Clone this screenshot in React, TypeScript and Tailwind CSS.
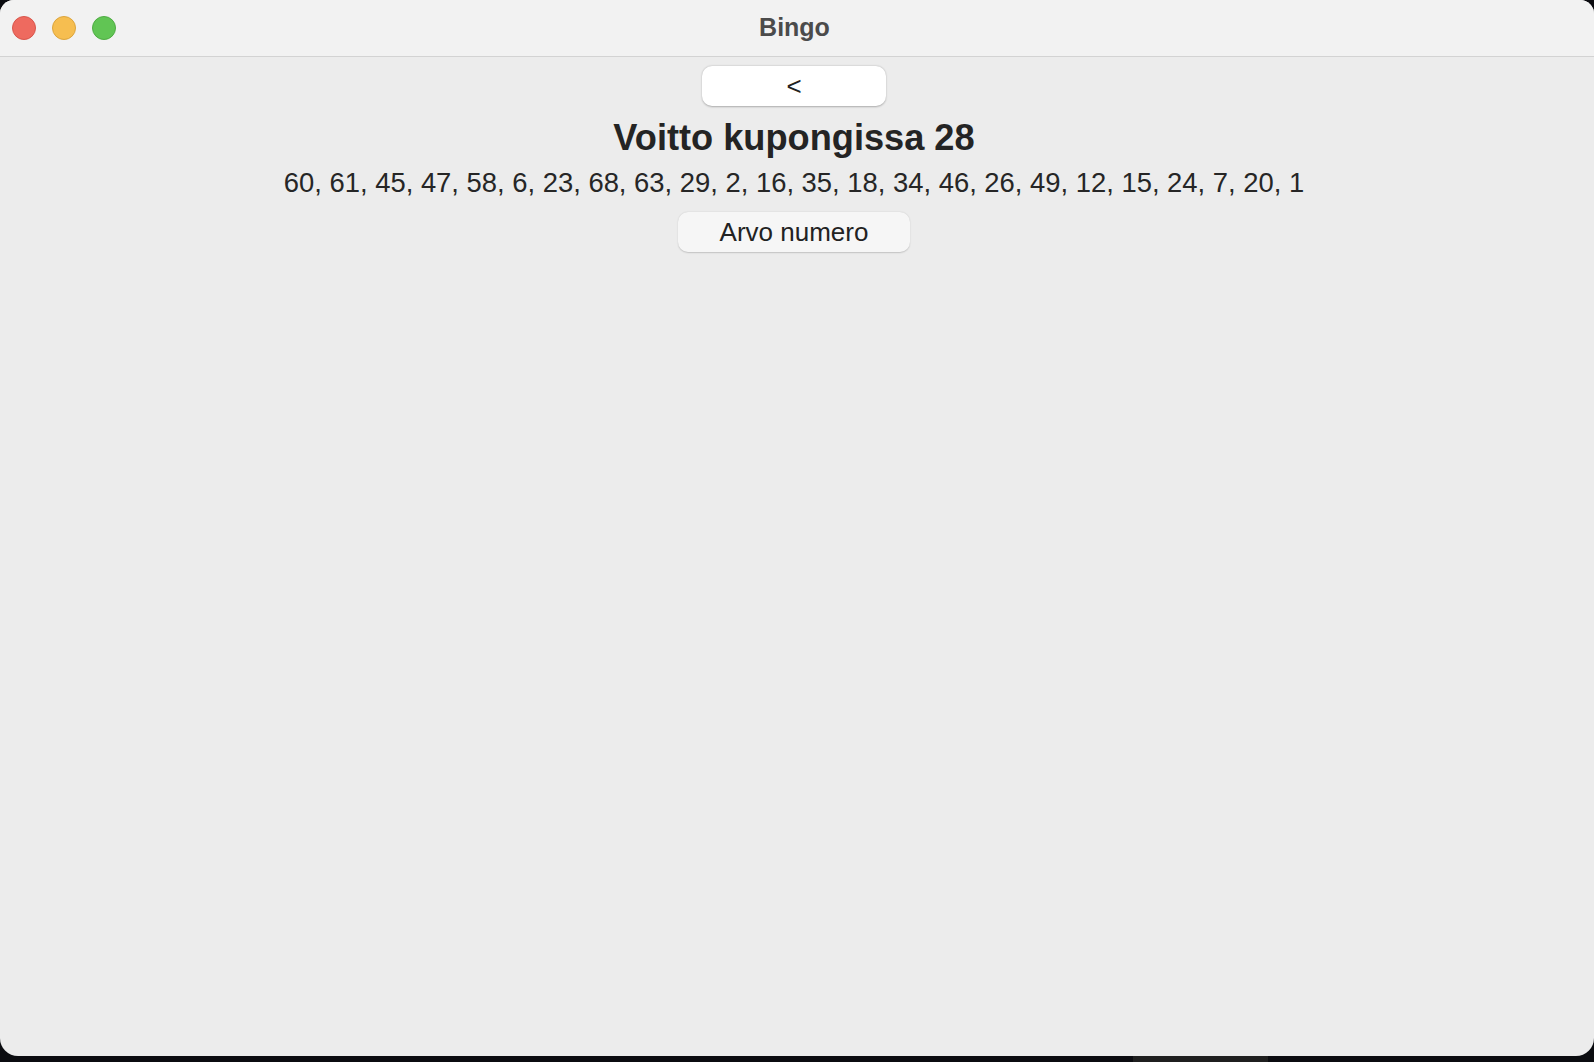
import React from 'react';

const numbers = [60, 61, 45, 47, 58, 6, 23, 68, 63, 29, 2, 16, 35, 18, 34, 46, 26, 49, 12, 15, 24, 7, 20, 1];

const TrafficLights: React.FC = () => (
  <div className="flex items-center gap-[16px] pl-[12px]">
    <span className="block w-[24px] h-[24px] rounded-full bg-[#ee6a5f] border border-[#d8564c]" />
    <span className="block w-[24px] h-[24px] rounded-full bg-[#f6be50] border border-[#dca53d]" />
    <span className="block w-[24px] h-[24px] rounded-full bg-[#61c554] border border-[#4fac43]" />
  </div>
);

const App: React.FC = () => {
  return (
    <div
      className="w-[1594px] h-[1062px] bg-[#0b0c10] flex flex-col overflow-hidden"
      style={{ fontFamily: '"Liberation Sans", Arial, sans-serif' }}
    >
      <div className="h-[1056px] w-full rounded-t-[14px] rounded-b-[18px] overflow-hidden flex flex-col bg-[#ececec]">
        {/* title bar */}
        <div className="relative h-[57px] shrink-0 bg-[#f2f2f2] border-b border-[#d3d3d3] flex items-center">
          <TrafficLights />
          <div className="absolute inset-0 flex items-center justify-center pr-[5px] pb-[1px]">
            <span className="text-[25px] font-bold text-[#4b4b4b]">Bingo</span>
          </div>
        </div>

        {/* content */}
        <div className="flex-1 flex flex-col items-center pt-[9px] pr-[6px]">
          <button className="w-[184px] h-[40px] bg-white rounded-[10px] shadow-[0_0.5px_2px_rgba(0,0,0,0.28)] flex items-center justify-center text-[26px] leading-none text-[#222] pb-[1px]">
            &lt;
          </button>

          <h1 className="mt-[10px] text-[36.2px] leading-[44px] font-bold text-[#242424]">
            Voitto kupongissa 28
          </h1>

          <p className="mt-[6px] text-[27.4px] leading-[34px] text-[#262626]">
            {numbers.join(', ')}
          </p>

          <button className="mt-[12px] w-[232px] h-[40px] bg-[#f6f6f6] rounded-[10px] shadow-[0_0.5px_1.5px_rgba(0,0,0,0.18)] flex items-center justify-center text-[26px] leading-none text-[#222]">
            Arvo numero
          </button>
        </div>
      </div>

      {/* desktop strip below the window */}
      <div className="flex-1 flex">
        <div className="w-[1133px]" />
        <div className="w-[135px] bg-[#1f1f1f]" />
      </div>
    </div>
  );
};

export default App;
